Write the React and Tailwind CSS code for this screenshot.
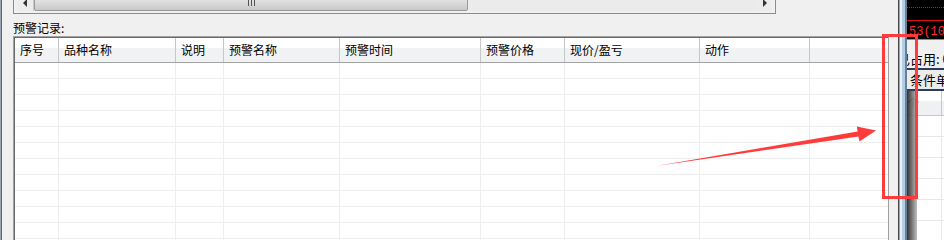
const columns = [
  { title: "序号", className: "w-[44px]" },
  { title: "品种名称", className: "w-[117px]" },
  { title: "说明", className: "w-[48px]" },
  { title: "预警名称", className: "w-[116px]" },
  { title: "预警时间", className: "w-[141px]" },
  { title: "预警价格", className: "w-[84px]" },
  { title: "现价/盈亏", className: "w-[135px]" },
  { title: "动作", className: "w-[110px]" },
  { title: "", className: "flex-1" },
];

const rows = Array.from({ length: 12 }, (_, i) => i);
const sideRows = Array.from({ length: 7 }, (_, i) => i);

function ScrollBox() {
  return (
    <div className="flex h-[14px] w-[763px] shrink-0 overflow-hidden border-x border-b border-[#8c8c8c]">
      <div className="ml-[3px] mt-[-6px] flex h-[17px] w-[755px] shrink-0">
        <div className="flex w-[17px] items-center justify-center border-r border-[#c8c8c8] bg-[#ececec]">
          <span className="h-0 w-0 border-y-[4px] border-r-[4px] border-y-transparent border-r-[#333]" />
        </div>
        <div className="flex w-[434px] items-center justify-center gap-[2px] rounded-[2px] border border-[#9a9a9a] bg-[linear-gradient(180deg,#e9e9e9_0%,#dcdcdc_50%,#c9c9c9_100%)]">
          <span className="h-[7px] w-px bg-[#555]" />
          <span className="h-[7px] w-px bg-[#555]" />
          <span className="h-[7px] w-px bg-[#555]" />
        </div>
        <div className="flex-1 bg-[#ebebeb]" />
        <div className="flex w-[14px] items-center justify-center bg-[#ececec]">
          <span className="h-0 w-0 border-y-[4px] border-l-[4px] border-y-transparent border-l-[#333]" />
        </div>
      </div>
    </div>
  );
}

function AlertTable() {
  return (
    <div className="w-[876px] shrink-0 border-l border-t border-r border-[#a0a0a0]">
      <div className="border-l border-t border-[#6b6b6b] bg-white">
        <div className="flex h-[25px] border-b border-[#a3a3a3] bg-[linear-gradient(180deg,#ffffff_0%,#ffffff_42%,#f1f2f4_42%,#f1f2f4_100%)]">
          {columns.map((col, i) => (
            <div
              key={i}
              className={`${col.className} flex items-center border-r border-[#c7c7c7] pl-[5px] text-[12px] leading-none text-black ${i === columns.length - 1 ? "border-r-0" : ""}`}
            >
              {col.title}
            </div>
          ))}
        </div>
        {rows.map((r) => (
          <div key={r} className="flex h-[16px] border-b border-[#ededed]">
            {columns.map((col, i) => (
              <div
                key={i}
                className={`${col.className} ${i === columns.length - 1 ? "" : "border-r border-[#ededed]"}`}
              />
            ))}
          </div>
        ))}
      </div>
    </div>
  );
}

function SidePanel() {
  return (
    <div className="relative flex w-[37px] shrink-0 flex-col overflow-hidden bg-white">
      <div className="h-[39px] shrink-0 bg-black">
        <div className="h-[7px]" />
        <div className="border-t border-dotted border-[#e01010]" />
        <div className="h-[12px]" />
        <div className="h-px bg-[#e01010]" />
        <div className="pl-[2px] pt-[5px] font-['Liberation_Mono',monospace] text-[12px] leading-[13px] whitespace-nowrap text-[#ff2a2a]">
          53(10
        </div>
      </div>
      <div className="flex h-[29px] shrink-0 items-center border-t border-[#8a8a8a] bg-[#f0f0f0]">
        <span className="ml-[-10px] pt-[9px] text-[13px] leading-none whitespace-nowrap text-black">已占用: 0</span>
      </div>
      <div className="flex h-[23px] shrink-0 items-center border-y-2 border-[#2b3f5c] bg-[#ececec] pl-[3px] text-[13px] leading-none whitespace-nowrap text-black">
        条件单
      </div>
      <div className="flex h-[25px] shrink-0 border-b border-[#c8c8c8] bg-[linear-gradient(180deg,#ffffff_0%,#ffffff_42%,#eef0f3_42%,#eef0f3_100%)]">
        <div className="flex w-[35px] items-center border-r border-[#c7c7c7] text-[12px] leading-none text-[#2f5fa8]">个</div>
      </div>
      {sideRows.map((r) => (
        <div key={r} className="flex h-[21px] shrink-0 border-b border-[#e8e8e8]">
          <div className="w-[35px] border-r border-[#e8e8e8]" />
        </div>
      ))}
      <div className="absolute bottom-0 left-0 top-[91px] w-[10px] bg-[linear-gradient(90deg,#1c1c1c_0%,#5a5a5a_40%,#b8b8b8_100%)] opacity-90" />
    </div>
  );
}

export default function App() {
  return (
    <div className="relative flex h-[240px] w-[944px] overflow-hidden bg-[#f0f0f0] font-['Noto_Sans_CJK_SC','Noto_Sans',sans-serif]">
      <div className="w-px shrink-0 bg-[#9aa5b0]" />
      <div className="w-px shrink-0 bg-[#5b6b7b]" />
      <div className="flex w-[896px] shrink-0 flex-col pl-[11px]">
        <ScrollBox />
        <div className="mt-[6px] h-[16px] shrink-0 text-[12px] leading-[16px] text-black">预警记录:</div>
        <AlertTable />
      </div>
      <div className="flex w-[9px] shrink-0">
        <div className="w-px bg-[#4a4a4a]" />
        <div className="w-px bg-[#9aa0a8]" />
        <div className="w-[2px] bg-[#eaf2fa]" />
        <div className="w-[3px] bg-[#b4cde6]" />
        <div className="w-[2px] bg-[#6b7f95]" />
      </div>
      <SidePanel />
      <div className="pointer-events-none absolute left-[882px] top-[34px] h-[165px] w-[36px] border-[3px] border-[#ff3b3b]" />
      <svg className="pointer-events-none absolute left-0 top-0" width="944" height="240" viewBox="0 0 944 240">
        <polygon
          points="656,166 857.6,131.5 856.8,126.4 876,130.5 859.4,141.6 858.4,136.5"
          fill="#ff3b3b"
        />
      </svg>
    </div>
  );
}
